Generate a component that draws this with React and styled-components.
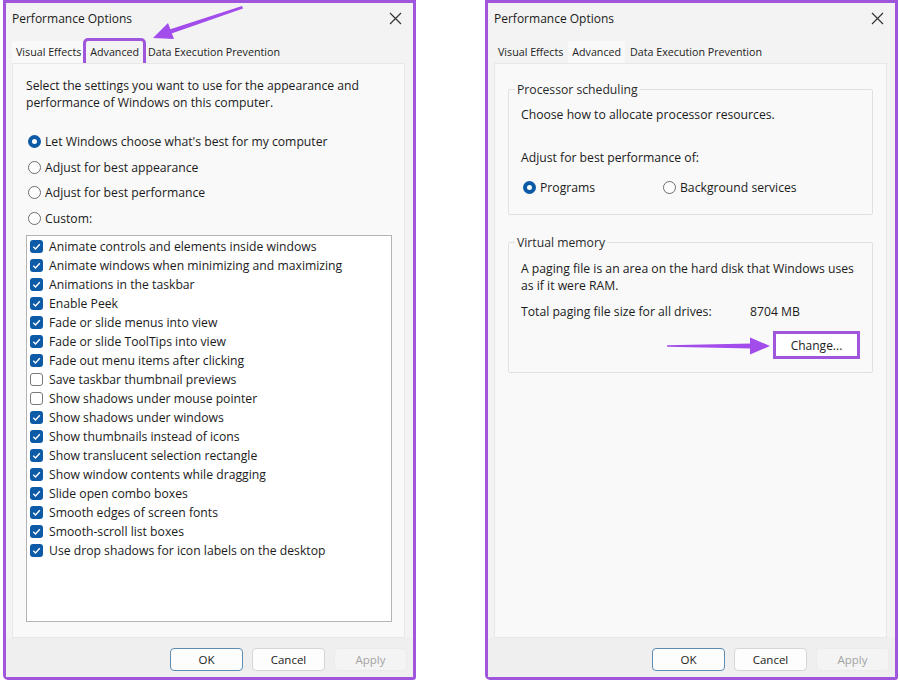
import React from 'react';
import styled, {createGlobalStyle, css} from 'styled-components';

const purple = '#9f55dc';
const arrowPurple = '#a24cec';
const blue = '#0d5aa6';

const Global = createGlobalStyle`
  html, body {
    margin: 0;
    padding: 0;
    background: #ffffff;
  }
  * {
    box-sizing: border-box;
  }
`;

const Page = styled.div`
  position: relative;
  display: flex;
  gap: 69px;
  width: 900px;
  height: 682px;
  padding-left: 3px;
  font-family: "Open Sans", "Noto Sans", sans-serif;
  color: #1b1b1b;
`;

const Window = styled.div`
  display: flex;
  flex-direction: column;
  width: 413px;
  height: 680px;
  border: 3px solid ${purple};
  border-radius: 0 0 3px 5px;
  background: #f3f3f3;
`;

const TitleBar = styled.div`
  display: flex;
  align-items: center;
  justify-content: space-between;
  height: 30px;
  padding: 1px 10px 0 6px;
  font-size: 12px;
`;

const Close = styled.svg`
  width: 13px;
  height: 13px;
  margin-right: 1px;
`;

const TabRow = styled.div`
  display: flex;
  height: 22px;
  margin-top: 8px;
  padding-left: 6px;
`;

const Tab = styled.div`
  display: flex;
  align-items: center;
  padding: 0 4px;
  margin-right: 1px;
  font-size: 10.7px;
  color: #222;
  background: ${p => (p.$active ? '#f9f9f9' : 'transparent')};
  border-radius: 2px 2px 0 0;
  ${p => p.$marked && css`
    outline: 3px solid ${purple};
    outline-offset: 0;
  `}
`;

const Panel = styled.div`
  flex: 1;
  margin: 0 8px 0 6px;
  padding: ${p => p.$pad || '13px 12px 0 13px'};
  background: #f9f9f9;
  border: 1px solid #e8e8e8;
  font-size: 12.2px;
  white-space: nowrap;
`;

const Para = styled.p`
  margin: ${p => p.$m || '0'};
  line-height: 17px;
`;

const Options = styled.div`
  display: flex;
  flex-direction: column;
  margin-top: 18px;
`;

const OptionRow = styled.label`
  display: flex;
  align-items: center;
  gap: 4px;
  height: ${p => p.$h || '25.5px'};
  padding-left: 2px;
`;

const Radio = styled.span`
  flex: none;
  width: 13px;
  height: 13px;
  border-radius: 50%;
  border: ${p => (p.$on ? `4px solid ${blue}` : '1px solid #6d6d6d')};
  background: #ffffff;
`;

const ListBox = styled.div`
  height: 387px;
  margin-top: 4px;
  padding: 1px 0 0 3px;
  background: #ffffff;
  border: 1px solid #b4b4b4;
`;

const CheckRow = styled.div`
  display: flex;
  align-items: center;
  gap: 6px;
  height: 19px;
`;

const Box = styled.span`
  flex: none;
  display: flex;
  align-items: center;
  justify-content: center;
  width: 13px;
  height: 13px;
  border-radius: 3px;
  background: ${p => (p.$on ? blue : '#ffffff')};
  border: ${p => (p.$on ? 'none' : '1px solid #7a7a7a')};
`;

const Footer = styled.div`
  display: flex;
  justify-content: flex-end;
  gap: 9px;
  height: 39px;
  padding: 10px 6px 0 0;
  background: #efefef;
`;

const Button = styled.div`
  display: flex;
  align-items: center;
  justify-content: center;
  width: 73px;
  height: 23px;
  font-size: 11.5px;
  border-radius: 4px;
  background: #fdfdfd;
  border: 1px solid ${p => (p.$default ? '#5d8db5' : '#d6d6d6')};
  color: ${p => (p.$disabled ? '#a3a3a3' : '#1b1b1b')};
  ${p => p.$disabled && css`
    background: #f4f4f4;
    border-color: #ececec;
  `}
`;

const Group = styled.fieldset`
  margin: ${p => p.$m || '0'};
  padding: ${p => p.$pad || '0 12px'};
  border: 1px solid #e1e1e1;
  border-radius: 2px;
`;

const Legend = styled.legend`
  margin-left: -6px;
  padding: 0 2px;
  line-height: 17px;
  color: #2a2a2a;
`;

const RadioPair = styled.div`
  display: grid;
  grid-template-columns: 140px auto;
  margin-top: 13px;
`;

const SizeLine = styled.div`
  display: grid;
  grid-template-columns: 229px auto;
  margin-top: 9px;
  line-height: 17px;
`;

const ButtonRight = styled.div`
  display: flex;
  justify-content: flex-end;
  margin-top: 11px;
`;

const ChangeButton = styled.div`
  display: flex;
  align-items: center;
  justify-content: center;
  width: 87px;
  height: 28px;
  background: #ffffff;
  border: 3px solid ${purple};
  font-size: 12px;
`;

const Annotations = styled.svg`
  position: absolute;
  left: 0;
  top: 0;
  width: 900px;
  height: 682px;
  pointer-events: none;
`;

const effects = [
  ['Animate controls and elements inside windows', true],
  ['Animate windows when minimizing and maximizing', true],
  ['Animations in the taskbar', true],
  ['Enable Peek', true],
  ['Fade or slide menus into view', true],
  ['Fade or slide ToolTips into view', true],
  ['Fade out menu items after clicking', true],
  ['Save taskbar thumbnail previews', false],
  ['Show shadows under mouse pointer', false],
  ['Show shadows under windows', true],
  ['Show thumbnails instead of icons', true],
  ['Show translucent selection rectangle', true],
  ['Show window contents while dragging', true],
  ['Slide open combo boxes', true],
  ['Smooth edges of screen fonts', true],
  ['Smooth-scroll list boxes', true],
  ['Use drop shadows for icon labels on the desktop', true],
];

const CloseIcon = () => (
  <Close viewBox="0 0 13 13">
    <path d="M1 1 L12 12 M12 1 L1 12" stroke="#333" strokeWidth="1.2" fill="none" />
  </Close>
);

const Check = () => (
  <svg width="9" height="9" viewBox="0 0 9 9">
    <path d="M1.3 4.8 L3.5 6.9 L7.8 2.2" stroke="#fff" strokeWidth="1.4" fill="none" />
  </svg>
);

const Title = () => (
  <TitleBar>
    <span>Performance Options</span>
    <CloseIcon />
  </TitleBar>
);

const Tabs = ({active, marked}) => (
  <TabRow>
    <Tab $active={active === 0}>Visual Effects</Tab>
    <Tab $active={active === 1} $marked={marked}>Advanced</Tab>
    <Tab $active={active === 2}>Data Execution Prevention</Tab>
  </TabRow>
);

const Buttons = () => (
  <Footer>
    <Button $default>OK</Button>
    <Button>Cancel</Button>
    <Button $disabled>Apply</Button>
  </Footer>
);

const VisualEffects = () => (
  <Window>
    <Title />
    <Tabs active={0} marked />
    <Panel>
      <Para>
        Select the settings you want to use for the appearance and
        <br />
        performance of Windows on this computer.
      </Para>
      <Options>
        <OptionRow><Radio $on />Let Windows choose what's best for my computer</OptionRow>
        <OptionRow><Radio />Adjust for best appearance</OptionRow>
        <OptionRow><Radio />Adjust for best performance</OptionRow>
        <OptionRow><Radio />Custom:</OptionRow>
      </Options>
      <ListBox>
        {effects.map(([label, on]) => (
          <CheckRow key={label}>
            <Box $on={on}>{on && <Check />}</Box>
            {label}
          </CheckRow>
        ))}
      </ListBox>
    </Panel>
    <Buttons />
  </Window>
);

const Advanced = () => (
  <Window>
    <Title />
    <Tabs active={1} />
    <Panel $pad="0 13px 0 13px">
      <Group $m="17px 0 0 0" $pad="0 12px 18px">
        <Legend>Processor scheduling</Legend>
        <Para $m="8px 0 0">Choose how to allocate processor resources.</Para>
        <Para $m="26px 0 0">Adjust for best performance of:</Para>
        <RadioPair>
          <OptionRow $h="17px"><Radio $on />Programs</OptionRow>
          <OptionRow $h="17px"><Radio />Background services</OptionRow>
        </RadioPair>
      </Group>
      <Group $m="19px 0 0 0" $pad="0 12px 13px">
        <Legend>Virtual memory</Legend>
        <Para $m="9px 0 0">
          A paging file is an area on the hard disk that Windows uses
          <br />
          as if it were RAM.
        </Para>
        <SizeLine>
          <span>Total paging file size for all drives:</span>
          <span>8704 MB</span>
        </SizeLine>
        <ButtonRight>
          <ChangeButton>Change...</ChangeButton>
        </ButtonRight>
      </Group>
    </Panel>
    <Buttons />
  </Window>
);

export default function App() {
  return (
    <>
      <Global />
      <Page>
        <VisualEffects />
        <Advanced />
        <Annotations viewBox="0 0 900 682">
          <polygon points="242,6 243,8.5 170,34 168,30" fill={arrowPurple} />
          <polygon points="153,38 168,23 174,39" fill={arrowPurple} />
          <polygon points="667,345.3 752,343.5 752,348.5 667,346.7" fill={arrowPurple} />
          <polygon points="770,346 750,337.5 750,354.5" fill={arrowPurple} />
        </Annotations>
      </Page>
    </>
  );
}
